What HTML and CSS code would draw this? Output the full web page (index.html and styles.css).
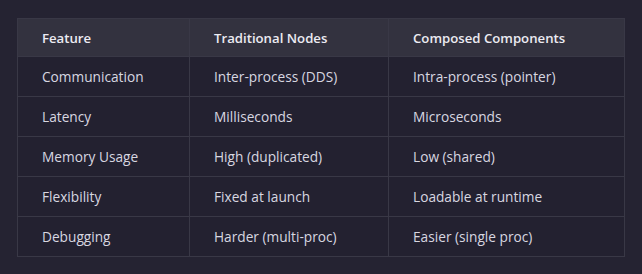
FILE: index.html
```html
<!DOCTYPE html>
<html>
<head>
<meta charset="utf-8">
<link rel="stylesheet" href="styles.css">
</head>
<body>
<div class="wrap">
<table class="cmp">
<thead>
<tr><th class="c1">Feature</th><th class="c2">Traditional Nodes</th><th class="c3">Composed Components</th></tr>
</thead>
<tbody>
<tr><td>Communication</td><td>Inter-process (DDS)</td><td>Intra-process (pointer)</td></tr>
<tr><td>Latency</td><td>Milliseconds</td><td>Microseconds</td></tr>
<tr><td>Memory Usage</td><td>High (duplicated)</td><td>Low (shared)</td></tr>
<tr><td>Flexibility</td><td>Fixed at launch</td><td>Loadable at runtime</td></tr>
<tr><td>Debugging</td><td>Harder (multi-proc)</td><td>Easier (single proc)</td></tr>
</tbody>
</table>
</div>
</body>
</html>
```
FILE: styles.css
```css
html, body {
  margin: 0;
  padding: 0;
  background: #252332;
  width: 642px;
  height: 274px;
  overflow: hidden;
}
.wrap {
  padding: 18px 0 0 17px;
}
.cmp {
  border-collapse: collapse;
  width: 608px;
  font-family: "Open Sans", "Noto Sans", sans-serif;
  font-size: 13.7px;
  color: #d8d7e0;
  background: #232130;
}
.cmp th, .cmp td {
  border: 1px solid #393846;
  text-align: left;
  padding: 0 0 0 24px;
  white-space: nowrap;
}
.cmp th {
  height: 37px;
  background: #33323f;
  color: #ecebf2;
  font-weight: 600;
  font-size: 13.2px;
}
.cmp td {
  height: 39px;
}
.c1 { width: 147px; }
.c2 { width: 174px; }
```
